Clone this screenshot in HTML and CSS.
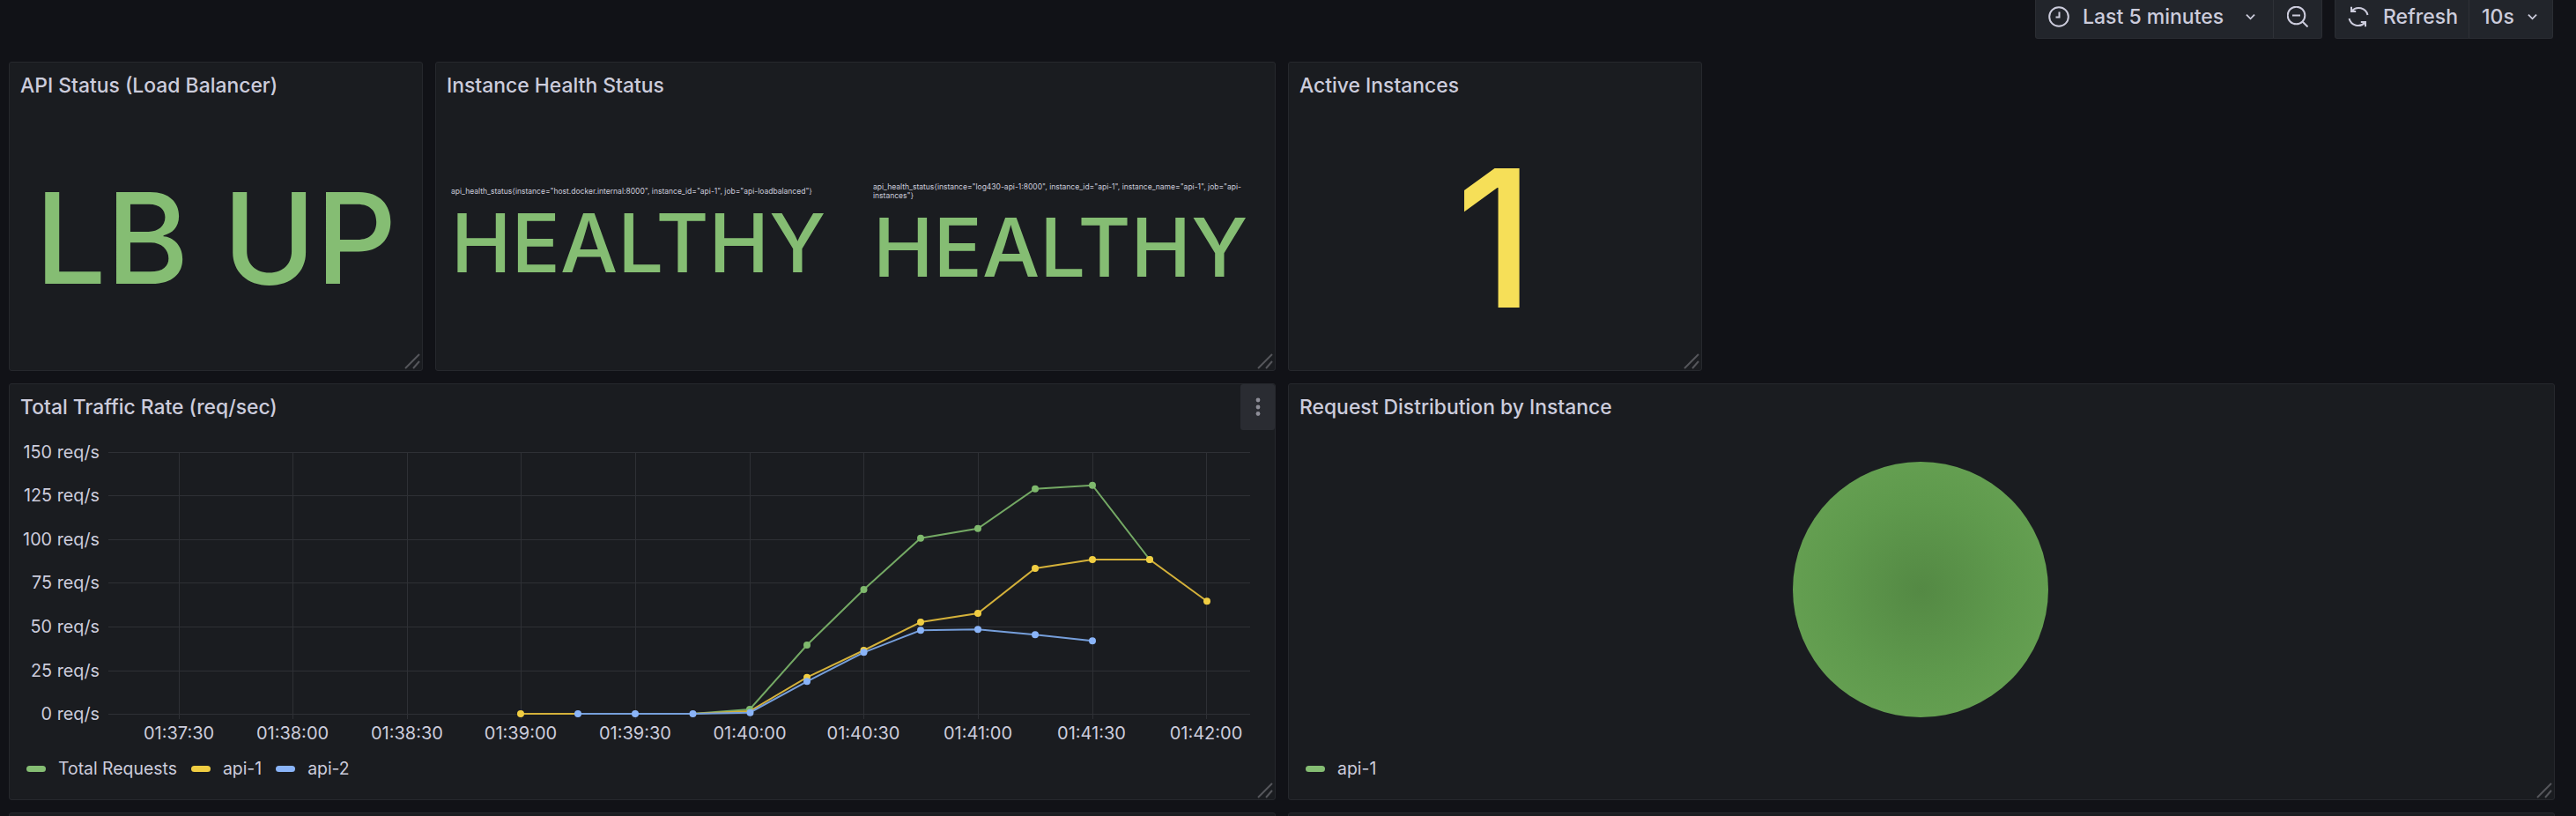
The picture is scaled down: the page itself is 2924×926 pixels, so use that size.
FILE: index.html
```html
<!DOCTYPE html>
<html lang="en">
<head>
    <meta charset="UTF-8">
    <title>API Dashboard</title>
    <link rel="stylesheet" href="styles.css">
</head>
<body>
    <div class="toolbar">
        <div class="btn-group">
            <div class="btn btn-time">
                <svg class="icon" viewBox="0 0 24 24"><circle cx="12" cy="12" r="10.8"/><path d="M12.5 6.5v6H8.5"/></svg>
                <span class="btn-label">Last 5 minutes</span>
                <svg class="chevron" viewBox="0 0 12 8"><path d="M1 1.5l5 5 5-5"/></svg>
            </div>
            <div class="btn btn-zoom">
                <svg class="icon" viewBox="0 0 24 24"><circle cx="10.5" cy="10.5" r="9.8"/><path d="M17.5 17.5l6 6M6 10.5h9"/></svg>
            </div>
        </div>
        <div class="btn-group">
            <div class="btn btn-refresh">
                <svg class="icon" viewBox="0 0 24 24"><path d="M4.5 5.5A10.5 10.5 0 0 1 22.5 10M19.5 18.5A10.5 10.5 0 0 1 1.5 14M4 .8v5.2h5.2M20 23.2V18h-5.2"/></svg>
                <span class="btn-label">Refresh</span>
            </div>
            <div class="btn btn-interval">
                <span class="btn-label">10s</span>
                <svg class="chevron" viewBox="0 0 12 8"><path d="M1 1.5l5 5 5-5"/></svg>
            </div>
        </div>
    </div>

    <div class="dashboard">
        <section class="panel span-4">
            <h2 class="panel-title">API Status (Load Balancer)</h2>
            <div class="stat-body">
                <div class="stat-value value-lb">LB UP</div>
            </div>
            <svg class="resize" viewBox="0 0 18 18"><path d="M1 17L17 1M10 17l7-8"/></svg>
        </section>

        <section class="panel span-8">
            <h2 class="panel-title">Instance Health Status</h2>
            <div class="stat-body stat-split">
                <div class="stat-item">
                    <div class="stat-label">api_health_status{instance="host.docker.internal:8000", instance_id="api-1", job="api-loadbalanced"}</div>
                    <div class="stat-value value-health">HEALTHY</div>
                </div>
                <div class="stat-item">
                    <div class="stat-label">api_health_status{instance="log430-api-1:8000", instance_id="api-1", instance_name="api-1", job="api-instances"}</div>
                    <div class="stat-value value-health">HEALTHY</div>
                </div>
            </div>
            <svg class="resize" viewBox="0 0 18 18"><path d="M1 17L17 1M10 17l7-8"/></svg>
        </section>

        <section class="panel span-4">
            <h2 class="panel-title">Active Instances</h2>
            <div class="stat-body">
                <div class="stat-value value-count">1</div>
            </div>
            <svg class="resize" viewBox="0 0 18 18"><path d="M1 17L17 1M10 17l7-8"/></svg>
        </section>

        <section class="panel span-12">
            <h2 class="panel-title">Total Traffic Rate (req/sec)</h2>
            <div class="panel-menu">
                <svg viewBox="0 0 6 24"><circle cx="3" cy="4" r="2.4"/><circle cx="3" cy="12" r="2.4"/><circle cx="3" cy="19.5" r="2.4"/></svg>
            </div>
            <svg class="chart" viewBox="11 490 1436 360">
                <g class="grid">
                    <path d="M123 513.5H1419M123 562.5H1419M123 612.5H1419M123 661.5H1419M123 711.5H1419M123 761.5H1419M123 810.5H1419"/>
                    <path d="M203.5 513V816M332.5 513V816M462.5 513V816M591.5 513V816M721.5 513V816M851.5 513V816M980.5 513V816M1110.5 513V816M1240.5 513V816M1369.5 513V816"/>
                </g>
                <g class="y-labels">
                    <text x="113" y="513">150 req/s</text>
                    <text x="113" y="562">125 req/s</text>
                    <text x="113" y="612">100 req/s</text>
                    <text x="113" y="661">75 req/s</text>
                    <text x="113" y="711">50 req/s</text>
                    <text x="113" y="761">25 req/s</text>
                    <text x="113" y="810">0 req/s</text>
                </g>
                <g class="x-labels">
                    <text x="203" y="832">01:37:30</text>
                    <text x="332" y="832">01:38:00</text>
                    <text x="462" y="832">01:38:30</text>
                    <text x="591" y="832">01:39:00</text>
                    <text x="721" y="832">01:39:30</text>
                    <text x="851" y="832">01:40:00</text>
                    <text x="980" y="832">01:40:30</text>
                    <text x="1110" y="832">01:41:00</text>
                    <text x="1239" y="832">01:41:30</text>
                    <text x="1369" y="832">01:42:00</text>
                </g>
                <g class="series series-green">
                    <polyline points="786,810 851,805 916,732 980.5,669 1045,610.7 1110,599.7 1175,554.7 1240,550.7 1305,635"/>
                    <circle cx="851" cy="805" r="4"/><circle cx="916" cy="732" r="4"/><circle cx="980.5" cy="669" r="4"/><circle cx="1045" cy="610.7" r="4"/><circle cx="1110" cy="599.7" r="4"/><circle cx="1175" cy="554.7" r="4"/><circle cx="1240" cy="550.7" r="4"/><circle cx="1305" cy="635" r="4"/>
                </g>
                <g class="series series-yellow">
                    <polyline points="591,810 656,810 721,810 786,810 851,807 916,768.7 980.5,738 1045,706 1110,696 1175,645 1240,635 1305,635 1370,682.3"/>
                    <circle cx="591" cy="810" r="4"/><circle cx="916" cy="768.7" r="4"/><circle cx="980.5" cy="738" r="4"/><circle cx="1045" cy="706" r="4"/><circle cx="1110" cy="696" r="4"/><circle cx="1175" cy="645" r="4"/><circle cx="1240" cy="635" r="4"/><circle cx="1305" cy="635" r="4"/><circle cx="1370" cy="682.3" r="4"/>
                </g>
                <g class="series series-blue">
                    <polyline points="656,810 721,810 786,810 851,808.7 916,773.3 980.5,740.3 1045,715.3 1110,714.3 1175,720.3 1240,727.3"/>
                    <circle cx="656" cy="810" r="4"/><circle cx="721" cy="810" r="4"/><circle cx="786.5" cy="810" r="4"/><circle cx="851.5" cy="808.7" r="4"/><circle cx="916" cy="773.3" r="4"/><circle cx="980.5" cy="740.3" r="4"/><circle cx="1045" cy="715.3" r="4"/><circle cx="1110" cy="714.3" r="4"/><circle cx="1175" cy="720.3" r="4"/><circle cx="1240" cy="727.3" r="4"/>
                </g>
            </svg>
            <div class="legend">
                <div class="legend-item"><span class="swatch swatch-green"></span>Total Requests</div>
                <div class="legend-item"><span class="swatch swatch-yellow"></span>api-1</div>
                <div class="legend-item"><span class="swatch swatch-blue"></span>api-2</div>
            </div>
            <svg class="resize" viewBox="0 0 18 18"><path d="M1 17L17 1M10 17l7-8"/></svg>
        </section>

        <section class="panel span-12">
            <h2 class="panel-title">Request Distribution by Instance</h2>
            <div class="pie-body">
                <div class="pie"></div>
            </div>
            <div class="legend">
                <div class="legend-item"><span class="swatch swatch-green"></span>api-1</div>
            </div>
            <svg class="resize" viewBox="0 0 18 18"><path d="M1 17L17 1M10 17l7-8"/></svg>
        </section>

        <section class="panel span-12"></section>
        <section class="panel span-12"></section>
    </div>
</body>
</html>
```

FILE: styles.css
```css
html, body {
    height: 926px;
    overflow: hidden;
}

body {
    margin: 0;
    background-color: #111217;
    color: #ccccdc;
    font-family: Inter, "Noto Sans", sans-serif;
}

/* top bar, the buttons run off the top of the window */
.toolbar {
    display: flex;
    justify-content: flex-end;
    gap: 14px;
    height: 44px;
    padding-right: 26px;
}

.btn-group {
    display: flex;
    border: 1px solid #2b2d33;
    border-top: none;
    border-radius: 0 0 3px 3px;
    background-color: #22252b;
}

.btn {
    display: flex;
    align-items: center;
    padding-bottom: 6px;
    font-size: 23px;
    font-weight: 500;
}

.btn + .btn {
    border-left: 1px solid #2f3137;
}

.btn-time {
    width: 269px;
    padding-left: 14px;
    box-sizing: border-box;
}

.btn-time .btn-label {
    margin: 0 25px 0 15px;
}

.btn-zoom {
    width: 55px;
    box-sizing: border-box;
    justify-content: center;
}

.btn-refresh {
    width: 151px;
    padding-left: 14px;
    box-sizing: border-box;
}

.btn-refresh .btn-label {
    margin-left: 16px;
}

.btn-interval {
    width: 95px;
    padding-left: 14px;
    box-sizing: border-box;
}

.btn-interval .btn-label {
    margin-right: 15px;
}

.icon {
    width: 24px;
    height: 24px;
    fill: none;
    stroke: #ccccdc;
    stroke-width: 2;
    flex: none;
}

.chevron {
    width: 11px;
    height: 8px;
    fill: none;
    stroke: #ccccdc;
    stroke-width: 2;
    flex: none;
}

.dashboard {
    display: grid;
    grid-template-columns: repeat(24, 1fr);
    grid-template-rows: 351px 473px 100px;
    gap: 14px;
    margin-top: 26px;
    padding: 0 24px 0 10px;
}

.span-4 {
    grid-column: span 4;
}

.span-8 {
    grid-column: span 8;
}

.span-12 {
    grid-column: span 12;
}

.panel {
    position: relative;
    display: flex;
    flex-direction: column;
    min-width: 0;
    box-sizing: border-box;
    background-color: #1a1c20;
    border: 1px solid #26282d;
    border-radius: 3px;
}

.panel-title {
    margin: 0;
    height: 52px;
    padding-left: 12px;
    flex: none;
    font-size: 22.9px;
    font-weight: 500;
    line-height: 52px;
}

.resize {
    position: absolute;
    right: 2px;
    bottom: 1px;
    width: 18px;
    height: 18px;
    fill: none;
    stroke: #55565b;
    stroke-width: 2;
}

/* stat panels */
.stat-body {
    flex: 1;
    display: flex;
    align-items: center;
    justify-content: center;
    padding-bottom: 3px;
}

.stat-split {
    justify-content: flex-start;
    gap: 39px;
    padding-left: 17px;
    padding-right: 16px;
}

.stat-item {
    flex: 1;
    min-width: 0;
}

.stat-label {
    font-size: 8.5px;
    line-height: 10px;
}

.stat-value {
    font-weight: 500;
    white-space: nowrap;
}

.value-lb {
    color: #85bd73;
    font-size: 143px;
    line-height: 170px;
}

.value-health {
    color: #85bd73;
    font-size: 92px;
    line-height: 107px;
}

.value-count {
    color: #f6df58;
    font-size: 217px;
    line-height: 260px;
}

/* graph panel */
.panel-menu {
    position: absolute;
    top: 0;
    right: 0;
    display: flex;
    align-items: center;
    justify-content: center;
    width: 39px;
    height: 52px;
    background-color: #2a2c32;
    border-radius: 3px;
}

.panel-menu svg {
    width: 6px;
    height: 24px;
    fill: #8e8e98;
}

.chart {
    display: block;
    flex: none;
    width: 1436px;
    height: 360px;
    margin-top: 2px;
}

.grid path {
    fill: none;
    stroke: #2e3035;
    stroke-width: 1;
}

.y-labels text {
    fill: #ccccdc;
    font-size: 19.8px;
    text-anchor: end;
    dominant-baseline: central;
}

.x-labels text {
    fill: #ccccdc;
    font-size: 20px;
    text-anchor: middle;
    dominant-baseline: central;
}

.series polyline {
    fill: none;
    stroke-width: 2;
}

.series-green polyline {
    stroke: #74a964;
}

.series-green circle {
    fill: #7fb96d;
}

.series-yellow polyline {
    stroke: #d4b13a;
}

.series-yellow circle {
    fill: #f0cd42;
}

.series-blue polyline {
    stroke: #769fdb;
}

.series-blue circle {
    fill: #8ab4f8;
}

.legend {
    display: flex;
    align-items: center;
    gap: 16px;
    height: 44px;
    padding-left: 19px;
    font-size: 19.4px;
}

.legend-item {
    display: flex;
    align-items: center;
}

.swatch {
    width: 22px;
    height: 7px;
    margin-right: 14px;
    border-radius: 4px;
}

.swatch-green {
    background-color: #85bd73;
}

.swatch-yellow {
    background-color: #f0cd42;
}

.swatch-blue {
    background-color: #8ab4f8;
}

/* pie panel */
.pie-body {
    flex: none;
    height: 362px;
    padding-right: 3px;
    display: flex;
    align-items: center;
    justify-content: center;
}

.pie {
    width: 290px;
    height: 290px;
    border-radius: 50%;
    background: radial-gradient(circle, #548944 0%, #5f9a4d 50%, #6ba556 100%);
}
```
